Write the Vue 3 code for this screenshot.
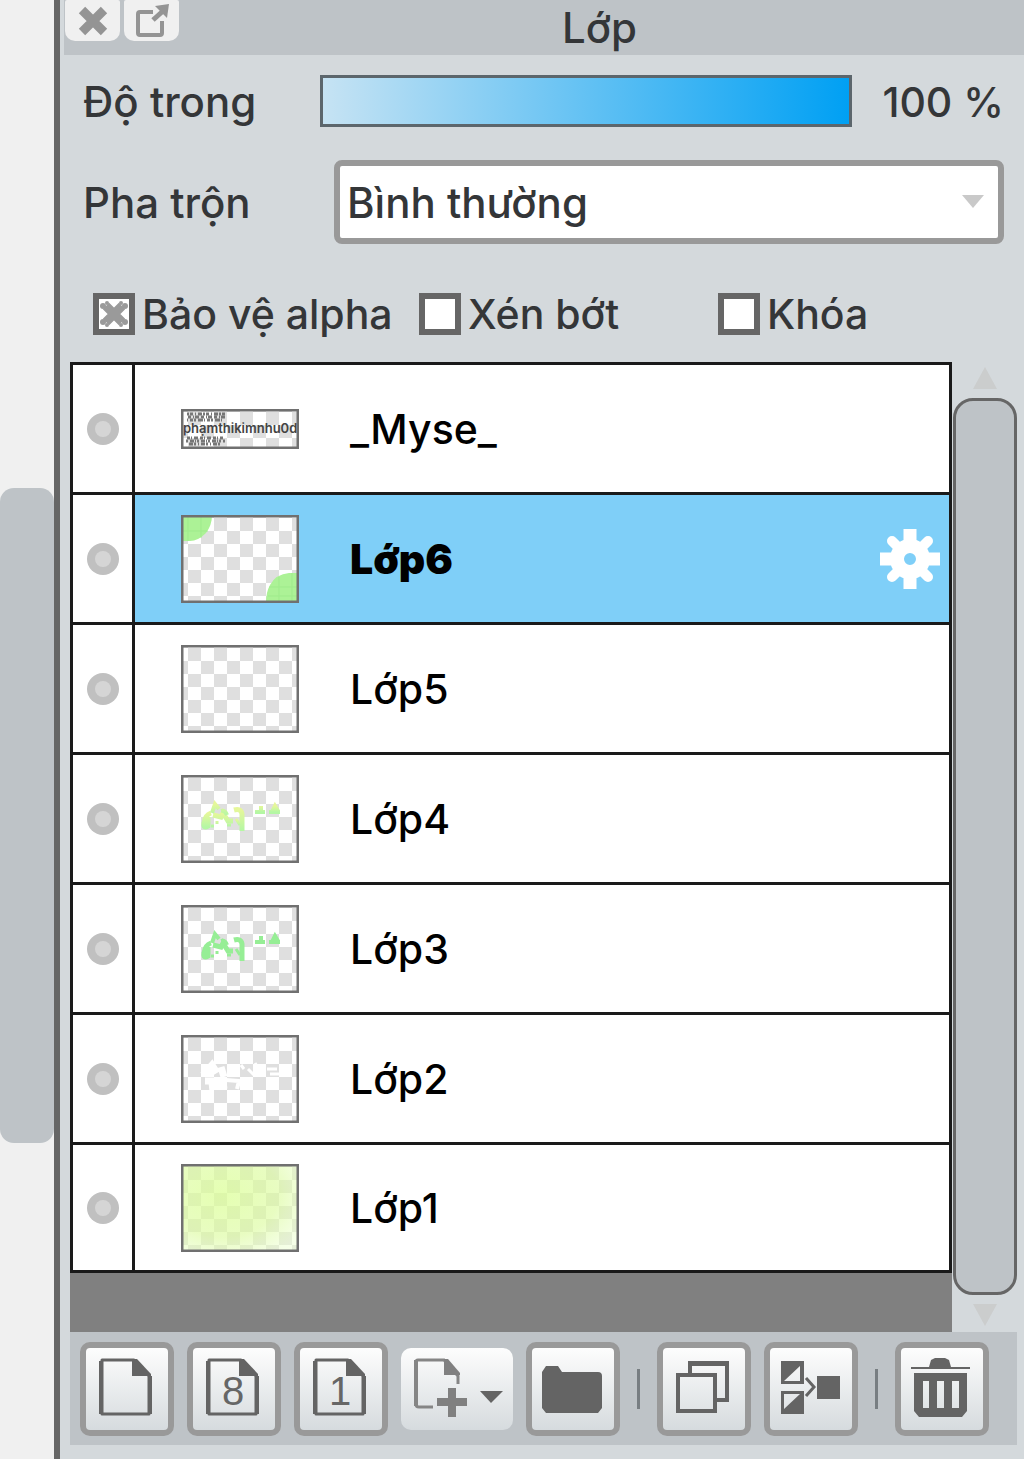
<script setup>
import { ref } from 'vue'

const opacity = ref(100)
const blend = ref('normal')
const options = ref([
  { id: 'alpha', label: 'Bảo vệ alpha', on: true },
  { id: 'clip', label: 'Xén bớt', on: false },
  { id: 'lock', label: 'Khóa', on: false },
])
const layers = [
  { name: '_Myse_', art: 'text', height: 40 },
  { name: 'Lớp6', art: 'corners', height: 88 },
  { name: 'Lớp5', art: 'empty', height: 88 },
  { name: 'Lớp4', art: 'lime', height: 88 },
  { name: 'Lớp3', art: 'green', height: 88 },
  { name: 'Lớp2', art: 'white', height: 88 },
  { name: 'Lớp1', art: 'wash', height: 88 },
]
const selected = ref('Lớp6')
</script>

<template>
  <div class="screen">
    <div class="gutter">
      <div class="gutter-thumb"></div>
    </div>
    <main class="panel">
      <header class="titlebar">
        <button class="tab" aria-label="Đóng">
          <svg width="32" height="32" viewBox="0 0 32 32"><path d="M5 5 27 27M27 5 5 27" stroke="#949494" stroke-width="9" /></svg>
        </button>
        <button class="tab" aria-label="Tách cửa sổ">
          <svg width="34" height="34" viewBox="0 0 34 34" fill="none" stroke="#949494">
            <path d="M18 8H5Q3 8 3 10V29Q3 31 5 31H25Q27 31 27 29V17" stroke-width="4" />
            <path d="M18 16 28 7" stroke-width="5" />
            <path d="M20 2 34 0 32 14Z" fill="#949494" stroke="none" />
          </svg>
        </button>
        <h1>Lớp</h1>
      </header>

      <section class="settings">
        <div class="field">
          <label for="opacity" class="opacity-label">Độ trong</label>
          <input id="opacity" v-model="opacity" type="range" min="0" max="100" />
          <output for="opacity">{{ opacity }} %</output>
        </div>
        <div class="field">
          <label for="blend" class="blend-label">Pha trộn</label>
          <div class="select-wrap">
            <select id="blend" v-model="blend">
              <option value="normal">Bình thường</option>
            </select>
            <svg class="arrow" width="22" height="13" viewBox="0 0 22 13"><path d="M0 0H22L11 13Z" fill="#c9c9c9" /></svg>
          </div>
        </div>
        <div class="checks">
          <label v-for="o in options" :key="o.id" :for="o.id">
            <span class="box">
              <input :id="o.id" v-model="o.on" type="checkbox" />
              <svg v-if="o.on" width="30" height="30" viewBox="0 0 30 30" fill="#9a9a9a">
                <path d="M7 7 23 23M23 7 7 23" stroke="#9a9a9a" stroke-width="9" />
                <circle cx="8" cy="4" r="2" /><circle cx="4" cy="7" r="3" />
                <circle cx="22" cy="4" r="2" /><circle cx="26" cy="7" r="3" />
                <circle cx="4" cy="23" r="3" /><circle cx="8" cy="26" r="2" />
                <circle cx="26" cy="23" r="3" /><circle cx="22" cy="26" r="2" />
              </svg>
            </span>
            {{ o.label }}
          </label>
        </div>
      </section>

      <section class="stack">
        <div class="list-area">
          <ul class="layers">
            <li v-for="l in layers" :key="l.name" :class="{ selected: l.name === selected }">
              <button class="eye" :aria-label="'Hiển thị ' + l.name">
                <svg width="34" height="34" viewBox="0 0 34 34"><circle cx="17" cy="17" r="16" fill="#c0c0c0" /><circle cx="17" cy="17" r="8" fill="#d5d5d5" /></svg>
              </button>
              <div class="layer" @click="selected = l.name">
                <svg class="thumb" width="118" :height="l.height" :viewBox="`0 0 118 ${l.height}`">
                  <defs>
                    <pattern :id="'checker-' + l.art" x="7" y="3" width="26" height="26" patternUnits="userSpaceOnUse">
                      <path d="M0 0H13V13H0ZM13 13H26V26H13Z" fill="#dfdfdf" />
                    </pattern>
                    <radialGradient id="wash" cx=".35" cy=".35" r=".8">
                      <stop offset="0" stop-color="#dcff98" stop-opacity=".75" />
                      <stop offset=".6" stop-color="#dcfba0" stop-opacity=".65" />
                      <stop offset="1" stop-color="#ecffd0" stop-opacity=".5" />
                    </radialGradient>
                    <linearGradient id="lime" x2="0" y2="1">
                      <stop offset="0" stop-color="#e6f79a" />
                      <stop offset="1" stop-color="#b4f7a4" />
                    </linearGradient>
                  </defs>
                  <rect width="118" :height="l.height" fill="#fff" />
                  <rect width="118" :height="l.height" :fill="`url(#checker-${l.art})`" />
                  <g v-if="l.art === 'text'" class="scribble">
                    <path d="M6 5H44" stroke-dasharray="2 1 3 2 1 2 4 1" />
                    <path d="M7 8H46" stroke-dasharray="3 2 1 1 4 2" />
                    <path d="M6 11H42" stroke-dasharray="1 2 3 1 2 2 5 1" />
                    <path d="M6 29H42" stroke-dasharray="3 1 1 2 4 2" />
                    <path d="M5 32H44" stroke-dasharray="2 2 4 1 1 1" />
                    <path d="M8 35H41" stroke-dasharray="4 1 2 2 1 2" />
                    <text x="2" y="24">phạmthikimnhu0d</text>
                  </g>
                  <g v-else-if="l.art === 'corners'" fill="#acf296">
                    <path d="M0 0H31Q31 10 25 18Q17 26 9 26H0Z" />
                    <path d="M118 58H108Q95 59 89 70Q85 77 85 88H118Z" />
                    <path d="M7 0V26M20 0V23M0 16H27M98 62V88M111 58V88M87 81H118M88 72H118" stroke="#98e985" opacity=".6" />
                  </g>
                  <g v-else-if="l.art === 'lime' || l.art === 'green'" :stroke="l.art === 'lime' ? 'url(#lime)' : '#96ee95'" fill="none">
                    <path d="M30 38Q24 40 23 48Q22 54 27 51V42M32 40 40 42L42 38L47 46L52 46" stroke-width="5" />
                    <path d="M31 38 34 29 38 34M40 36Q44 35 46 40" stroke-width="4" />
                    <path d="M53 35Q60 33 61 39V56" stroke-width="5" />
                    <path d="M55 44 59 50M36 46V49M30 51H33M46 50H50" stroke-width="3" />
                    <path d="M74 37H84M80 37V31M88 37H99M91 37 94 31 97 36" stroke-width="4" />
                  </g>
                  <g v-else-if="l.art === 'white'" stroke="#fff" fill="none">
                    <path d="M22 40 31 30 36 38M24 46 38 46M40 32 43 42M28 52 46 50" stroke-width="7" />
                    <path d="M47 36 56 40M60 30 63 34M67 34 73 40M74 28 78 34 82 30M86 34 96 34M89 39H98" stroke-width="3" />
                    <path d="M45 45 58 46 56 54" stroke-width="4" />
                  </g>
                  <rect v-else-if="l.art === 'wash'" width="118" height="88" fill="url(#wash)" />
                  <rect x="1" y="1" width="116" :height="l.height - 2" fill="none" stroke="#707070" stroke-width="3" />
                </svg>
                <span class="name">{{ l.name }}</span>
                <button v-if="l.name === selected" class="gear" aria-label="Cài đặt lớp">
                  <svg width="60" height="60" viewBox="-30 -30 60 60">
                    <path d="M0-30V-10M0 30V10M-30 0H-10M30 0H10" stroke="#fff" stroke-width="13" />
                    <path d="M-18-18-10-10M18 18 10 10M-18 18-10 10M18-18 10-10" stroke="#fff" stroke-width="10" stroke-linecap="round" />
                    <circle r="13" fill="none" stroke="#fff" stroke-width="14" />
                  </svg>
                </button>
              </div>
            </li>
          </ul>
        </div>
        <div class="scrollbar">
          <svg width="24" height="22" viewBox="0 0 24 22"><path d="M12 0 24 22H0Z" fill="#cbcdcd" /></svg>
          <div class="scroll-thumb"></div>
          <svg width="24" height="22" viewBox="0 0 24 22"><path d="M0 0H24L12 22Z" fill="#cbcdcd" /></svg>
        </div>
      </section>

      <nav class="toolbar" aria-label="Công cụ lớp">
        <button class="tool" aria-label="Thêm lớp">
          <svg width="82" height="82" viewBox="0 0 82 82"><use href="#page" /></svg>
        </button>
        <button class="tool" aria-label="Thêm lớp 8 bit">
          <svg width="82" height="82" viewBox="0 0 82 82"><use href="#page" /><text x="40" y="57">8</text></svg>
        </button>
        <button class="tool" aria-label="Thêm lớp 1 bit">
          <svg width="82" height="82" viewBox="0 0 82 82"><use href="#page" /><text x="40" y="57">1</text></svg>
        </button>
        <button class="tool-menu" aria-label="Thêm lớp khác">
          <svg width="112" height="82" viewBox="0 0 112 82">
            <path d="M32 59H18Q15 59 15 56V14Q15 12 17 12H43L57 28V36" fill="none" stroke="#858585" stroke-width="3" />
            <path d="M15 12V58" stroke="#858585" stroke-width="4" />
            <path d="M43 11H47L59 25V27H43Z" fill="#808080" />
            <path d="M51 40V69M36 54H66" stroke="#808080" stroke-width="8" />
            <path d="M79 43H102L90 55Z" fill="#646464" />
          </svg>
        </button>
        <button class="tool" aria-label="Thư mục">
          <svg width="82" height="82" viewBox="0 0 82 82"><path d="M10 24 14 18H26L30 24H66Q70 24 70 28V60L66 65H14L10 60Z" fill="#646464" /></svg>
        </button>
        <span class="separator"></span>
        <button class="tool" aria-label="Nhân đôi lớp">
          <svg width="82" height="82" viewBox="0 0 82 82" fill="none" stroke="#646464" stroke-width="4">
            <path d="M27 26V15H64V52H54M27 16H64" />
            <path d="M15 27H52V63H15Z" />
          </svg>
        </button>
        <button class="tool" aria-label="Gộp lớp">
          <svg width="82" height="82" viewBox="0 0 82 82" fill="#646464">
            <path fill-rule="evenodd" d="M11 13H34V36H11ZM14 33H30V18Z" />
            <path fill-rule="evenodd" d="M11 43H34V66H11ZM14 46V61L30 46Z" />
            <path d="M36 30 44 39 36 48" fill="none" stroke="#646464" stroke-width="3" />
            <path d="M47 28H70V51H47Z" />
          </svg>
        </button>
        <span class="separator"></span>
        <button class="tool" aria-label="Xóa lớp">
          <svg width="82" height="82" viewBox="0 0 82 82" fill="#646464">
            <path d="M28 19 30 12 34 10H44L48 12 50 19H69V21H10V19Z" />
            <path fill-rule="evenodd" d="M13 25H66V63L61 69H18L13 63ZM22 33V60H28V33ZM36 33V60H43V33ZM51 33V60H58V33Z" />
          </svg>
        </button>
      </nav>

      <svg width="0" height="0" class="symbols" aria-hidden="true">
        <symbol id="page" viewBox="0 0 82 82">
          <path d="M16 12H48L63 28V66H16Z" fill="none" stroke="#646464" stroke-width="3" stroke-linejoin="round" />
          <path d="M15 13V66M64 28V66" stroke="#646464" stroke-width="4" />
          <path d="M46 11H51L65 26V28H46Z" fill="#646464" />
        </symbol>
      </svg>
    </main>
  </div>
</template>

<style>
body {
  margin: 0;
}
</style>

<style scoped>
* {
  box-sizing: border-box;
}
.screen {
  display: flex;
  min-height: 100vh;
  background: #d4d9dc;
  color: #343638;
  font-family: Inter, "Liberation Sans", sans-serif;
  font-size: 42px;
  font-weight: 500;
  line-height: 48px;
}
svg {
  display: block;
}
button {
  padding: 0;
  border: 0;
  background: none;
  font: inherit;
  color: inherit;
}
.gutter {
  display: flex;
  flex-direction: column;
  width: 60px;
  flex: none;
  background: #f0f0f0;
  border-right: 6px solid #666;
}
.gutter::before {
  content: "";
  flex: 488;
}
.gutter-thumb {
  flex: 655;
  border-radius: 14px;
  background: #bec3c7;
}
.gutter::after {
  content: "";
  flex: 316;
}
.panel {
  flex: 1;
  min-width: 0;
}
.titlebar {
  display: flex;
  align-items: flex-start;
  gap: 4px;
  height: 55px;
  margin-left: 4px;
  padding-left: 1px;
  background: #bec3c7;
}
.tab {
  display: flex;
  justify-content: center;
  align-items: center;
  width: 55px;
  height: 41px;
  border-radius: 2px 2px 10px 10px;
  background: #f0f0f0;
}
h1 {
  flex: 1;
  margin: 4px 8px 0 0;
  font: inherit;
  text-align: center;
}
.settings {
  padding: 20px 20px 0 23px;
}
.field {
  display: flex;
  align-items: center;
}
.field + .field {
  margin-top: 33px;
}
.field label,
output {
  padding-top: 2px;
}
.opacity-label {
  width: 237px;
}
.blend-label {
  width: 251px;
}
input[type="range"] {
  appearance: none;
  flex: 1;
  min-width: 0;
  height: 52px;
  margin: 0;
  border: 3px solid #5c666c;
  background: linear-gradient(90deg, #c6e3f3, #5fc0f3 52%, #00a0f3);
}
input[type="range"]::-webkit-slider-thumb {
  appearance: none;
  width: 1px;
  height: 46px;
}
output {
  width: 152px;
  font-size: 41px;
  text-align: right;
}
.select-wrap {
  position: relative;
  flex: 1;
}
select {
  appearance: none;
  display: block;
  width: 100%;
  height: 84px;
  padding: 2px 7px 0;
  border: 6px solid #999;
  border-radius: 8px;
  background: #fff;
  color: inherit;
  font: inherit;
}
.arrow {
  position: absolute;
  top: 35px;
  right: 20px;
  pointer-events: none;
}
.checks {
  display: grid;
  grid-template-columns: 326fr 299fr 286fr;
  margin: 46px 0 24px 10px;
  font-size: 41px;
}
.checks label {
  display: flex;
  align-items: center;
  gap: 7px;
  white-space: nowrap;
}
.box {
  position: relative;
}
.box input {
  appearance: none;
  display: block;
  width: 42px;
  height: 42px;
  margin: 0;
  border: 6px solid #666;
  background: #fff;
}
.box svg {
  position: absolute;
  top: 6px;
  left: 6px;
}
.stack {
  display: flex;
  padding: 0 7px 0 10px;
}
.list-area {
  flex: 1;
  padding-bottom: 59px;
  background: #808080;
}
.layers {
  margin: 0;
  padding: 0;
  list-style: none;
  border: 3px solid #1a1a1a;
  background: #fff;
  font-size: 41px;
}
.layers li {
  display: flex;
  height: 130px;
  border-bottom: 3px solid #1a1a1a;
}
.layers li:last-child {
  height: 125px;
  border-bottom: 0;
}
.eye {
  display: flex;
  align-items: center;
  justify-content: center;
  width: 62px;
  border-right: 3px solid #1a1a1a;
}
.layer {
  display: flex;
  flex: 1;
  align-items: center;
  padding: 0 9px 0 46px;
  color: #000;
}
.selected .layer {
  background: #7fcff8;
}
.selected .name {
  font-weight: 900;
}
.name {
  margin-left: 51px;
}
.gear {
  margin-left: auto;
}
.scribble {
  stroke: #777;
  stroke-width: 3px;
}
.scribble text {
  fill: #444;
  stroke: none;
  font-size: 13px;
  font-weight: 600;
}
.scrollbar {
  display: flex;
  flex-direction: column;
  align-items: center;
  gap: 9px;
  width: 65px;
  padding: 5px 0 6px;
}
.scroll-thumb {
  flex: 1;
  width: 64px;
  border: 3px solid #666;
  border-radius: 20px;
  background: #bec3c7;
}
.toolbar {
  display: flex;
  align-items: center;
  gap: 13px;
  margin: 0 7px 14px 10px;
  padding: 10px 10px 9px;
  background: #bec3c7;
}
.tool {
  width: 94px;
  height: 94px;
  border: 6px solid #999;
  border-radius: 10px;
  background: linear-gradient(#fdfdfd, #d6dbde);
}
.tool text {
  fill: #666;
  font-family: "Liberation Sans", Arial, sans-serif;
  font-size: 40px;
  text-anchor: middle;
}
.tool-menu {
  width: 112px;
  height: 82px;
  border-radius: 10px;
  background: linear-gradient(#fdfdfd, #d6dbde);
}
.separator {
  width: 3px;
  height: 40px;
  margin: 0 4px;
  background: #787e82;
}
.symbols {
  position: absolute;
}
</style>
